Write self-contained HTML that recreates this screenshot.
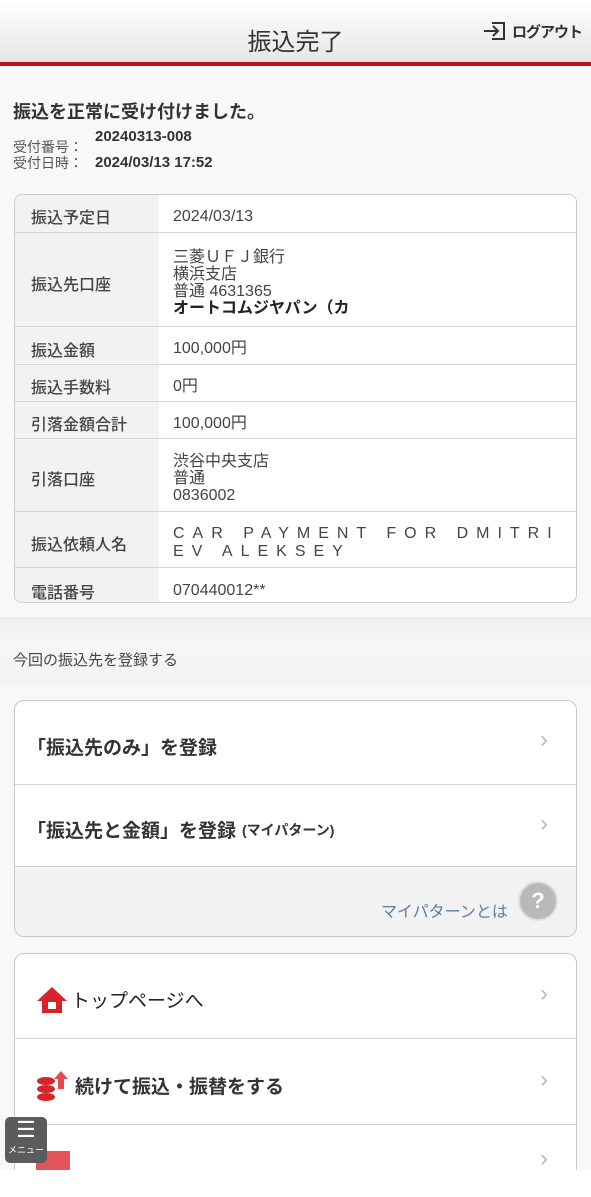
<!DOCTYPE html>
<html><head><meta charset="utf-8"><style>
*{margin:0;padding:0;box-sizing:border-box}
html,body{width:591px;height:1197px;overflow:hidden}
body{background:#f8f8f8;font-family:"Liberation Sans","Noto Sans CJK JP",sans-serif;color:#333;position:relative}
.a{position:absolute}
.hdr{left:0;top:0;width:591px;height:62px;background:linear-gradient(#fff,#e6e6e6)}
.red{left:0;top:62px;width:591px;height:4px;background:#c0141c}
.tbl{left:14px;top:194px;width:563px;height:409px;border:1px solid #ccc;border-radius:8px;overflow:hidden;background:#fff}
.row{position:absolute;left:0;width:100%;border-top:1px solid #d4d4d4;display:flex}
.row .l{width:144px;background:#f2f2f2;display:flex;align-items:center;padding-left:16px;padding-top:6px;font-size:16px;color:#444;font-weight:500}
.row .v{flex:1;padding-left:14px;padding-top:6px;display:flex;flex-direction:column;justify-content:center;font-size:16px;line-height:17px;color:#444}
.card{left:14px;width:563px;border:1px solid #c8c8c8;border-radius:10px;background:#fff;overflow:hidden}
.it{position:absolute;left:0;width:100%;border-top:1px solid #d0d0d0;font-size:19px;font-weight:bold;color:#333;display:flex;align-items:center;padding-left:20px;padding-top:8px}
.chev{position:absolute;right:28px;top:calc(50% - 16px);color:#bbb;font-size:24px;font-weight:normal}
</style></head><body>
<div class="a hdr"></div>
<div class="a" style="left:0;top:22px;width:591px;text-align:center;font-size:24px;color:#333">振込完了</div>
<div class="a" style="left:482px;top:20px;font-size:15px;color:#333;display:flex;align-items:center;white-space:nowrap;font-weight:bold;letter-spacing:-1px">
<svg width="26" height="22" viewBox="0 0 26 22"><path d="M10 3h12v16H10M2 11h14M11 6l5 5-5 5" fill="none" stroke="#333" stroke-width="2"/></svg><span style="margin-left:4px">ログアウト</span></div>
<div class="a red"></div>
<div class="a" style="left:13px;top:98px;font-size:18px;font-weight:bold;color:#333">振込を正常に受け付けました。</div>
<div class="a" style="left:13px;top:139px;font-size:14px;color:#555;line-height:16px">受付番号：<br>受付日時：</div>
<div class="a" style="left:95px;top:128px;font-size:15px;font-weight:bold;color:#333">20240313-008</div>
<div class="a" style="left:95px;top:154px;font-size:15px;font-weight:bold;color:#333">2024/03/13 17:52</div>
<div class="a tbl">
<div class="row" style="top:-1px;height:38px;border-top:none"><div class="l">振込予定日</div><div class="v">2024/03/13</div></div>
<div class="row" style="top:37px;height:94px"><div class="l">振込先口座</div><div class="v">三菱ＵＦＪ銀行<br>横浜支店<br>普通 4631365<br><b style="color:#222">オートコムジヤパン（カ</b></div></div>
<div class="row" style="top:131px;height:38px"><div class="l">振込金額</div><div class="v">100,000円</div></div>
<div class="row" style="top:169px;height:37px"><div class="l">振込手数料</div><div class="v">0円</div></div>
<div class="row" style="top:206px;height:37px"><div class="l">引落金額合計</div><div class="v">100,000円</div></div>
<div class="row" style="top:243px;height:73px"><div class="l">引落口座</div><div class="v">渋谷中央支店<br>普通<br>0836002</div></div>
<div class="row" style="top:316px;height:56px"><div class="l">振込依頼人名</div><div class="v" style="letter-spacing:8px;line-height:18px">CAR PAYMENT FOR DMITRI<br>EV ALEKSEY</div></div>
<div class="row" style="top:372px;height:40px"><div class="l">電話番号</div><div class="v">070440012**</div></div>
</div>
<div class="a" style="left:0;top:617px;width:591px;height:68px;background:linear-gradient(#eee,#f6f6f6 40%,#f3f3f3)"></div>
<div class="a" style="left:13px;top:649px;font-size:15px;color:#444">今回の振込先を登録する</div>
<div class="a card" style="top:700px;height:237px">
<div class="it" style="top:-1px;height:84px;border-top:none;padding-left:12px">「振込先のみ」を登録<span class="chev">›</span></div>
<div class="it" style="top:83px;height:82px;padding-left:12px">「振込先と金額」を登録<span style="font-size:14px;margin-left:6px">(マイパターン)</span><span class="chev">›</span></div>
<div style="position:absolute;top:165px;left:0;width:100%;height:72px;background:#f2f2f2;border-top:1px solid #d0d0d0"></div>
<div class="a" style="left:366px;top:197px;font-size:16px;color:#5a7f9e">マイパターンとは</div>
<div class="a" style="left:503px;top:180px;width:40px;height:40px;border-radius:50%;background:#b9b9b9;border:2px solid #ddd;color:#fff;font-size:22px;font-weight:bold;text-align:center;line-height:36px">?</div>
</div>
<div class="a card" style="top:953px;height:217px;border-bottom:none;border-radius:10px 10px 0 0">
<div class="it" style="top:-1px;height:85px;border-top:none;font-weight:normal;color:#222">
<svg width="34" height="30" viewBox="0 0 34 30" style="margin-right:2px"><path d="M17 2L2 16h5v12h20V16h5z" fill="#d9232a"/><rect x="13" y="17" width="8" height="7" fill="#fff"/></svg>トップページへ<span class="chev">›</span></div>
<div class="it" style="top:84px;height:86px"><svg width="36" height="34" viewBox="0 0 36 34" style="margin-right:4px"><ellipse cx="11" cy="12" rx="9" ry="4" fill="#d9232a"/><ellipse cx="11" cy="20" rx="9" ry="4" fill="#d9232a"/><ellipse cx="11" cy="28" rx="9" ry="4" fill="#d9232a"/><path d="M26 2l7 8h-4v10h-6V10h-4z" fill="#e5484e"/></svg>続けて振込・振替をする<span class="chev">›</span></div>
<div class="it" style="top:170px;height:90px"><span class="chev" style="top:20px">›</span></div>
</div>
<div class="a" style="left:36px;top:1151px;width:34px;height:19px;background:#e2545a"></div>
<div class="a" style="left:0;top:1170px;width:591px;height:27px;background:#fff"></div>
<div class="a" style="left:5px;top:1117px;width:42px;height:46px;background:#5b5b5b;border-radius:5px;color:#fff;text-align:center">
<div style="font-size:22px;line-height:26px">☰</div><div style="font-size:9px">メニュー</div></div>
</body></html>
